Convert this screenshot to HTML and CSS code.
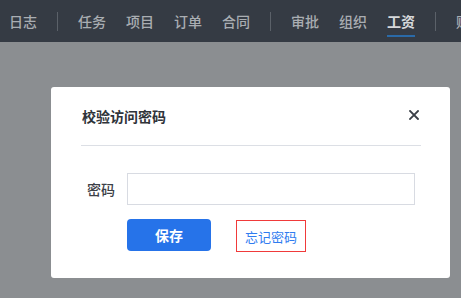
FILE: index.html
```html
<!DOCTYPE html>
<html lang="zh">
<head>
<meta charset="utf-8">
<link rel="stylesheet" href="styles.css">
</head>
<body>
<header class="topbar">
  <nav class="nav">
    <span class="nav-item">日志</span>
    <span class="nav-sep"></span>
    <span class="nav-item">任务</span>
    <span class="nav-item">项目</span>
    <span class="nav-item">订单</span>
    <span class="nav-item">合同</span>
    <span class="nav-sep"></span>
    <span class="nav-item">审批</span>
    <span class="nav-item">组织</span>
    <span class="nav-item active">工资</span>
    <span class="nav-sep"></span>
    <span class="nav-item">财务</span>
  </nav>
</header>
<main class="overlay">
  <section class="modal">
    <div class="modal-header">
      <h2 class="modal-title">校验访问密码</h2>
      <svg class="close" width="10" height="10" viewBox="0 0 10 10"><path d="M1 1L9 9M9 1L1 9" stroke="#3a3f47" stroke-width="1.8" stroke-linecap="square"/></svg>
    </div>
    <div class="form-row">
      <label class="form-label">密码</label>
      <input class="form-input" type="password">
    </div>
    <div class="form-actions">
      <button class="btn-primary">保存</button>
      <a class="forgot">忘记密码</a>
    </div>
  </section>
</main>
</body>
</html>
```
FILE: styles.css
```css
* { box-sizing: border-box; }
html, body { margin: 0; padding: 0; }
body {
  width: 461px;
  height: 298px;
  overflow: hidden;
  background: #8b8e91;
  font-family: "Noto Sans CJK SC", "Noto Sans", sans-serif;
}
.topbar {
  height: 42px;
  background: #353b44;
  overflow: hidden;
}
.nav {
  display: flex;
  align-items: center;
  gap: 20px;
  padding-left: 9px;
  height: 42px;
  white-space: nowrap;
}
.nav-item {
  position: relative;
  font-size: 14px;
  line-height: 20px;
  color: #a9adb2;
  font-weight: 500;
  flex: none;
}
.nav-item.active {
  color: #d6d8db;
  font-weight: bold;
}
.nav-item.active::after {
  content: "";
  position: absolute;
  left: 0;
  right: 0;
  top: 24px;
  height: 2px;
  background: #2a6aa8;
}
.nav-sep {
  width: 1px;
  height: 19px;
  background: #5b6169;
  flex: none;
}
.overlay {
  padding: 45px 0 0 51px;
}
.modal {
  width: 399px;
  height: 191px;
  background: #fff;
  border-radius: 3px;
  padding: 0 29px 0 30px;
}
.modal-header {
  display: flex;
  align-items: center;
  justify-content: space-between;
  height: 59px;
  padding-bottom: 1px;
  border-bottom: 1px solid #dcdfe5;
}
.modal-title {
  margin: 0;
  font-size: 14px;
  line-height: 20px;
  font-weight: bold;
  color: #2f3339;
  padding-left: 1px;
}
.close {
  margin-right: 2px;
  margin-top: -1px;
}
.form-row {
  display: flex;
  align-items: center;
  margin-top: 27px;
}
.form-label {
  width: 46px;
  padding-right: 12px;
  text-align: right;
  font-size: 14px;
  font-weight: 500;
  color: #3c4047;
}
.form-input {
  width: 288px;
  height: 32px;
  border: 1px solid #d8dbe2;
  border-radius: 0;
  outline: none;
  margin: 0;
  padding: 0 8px;
}
.form-actions {
  display: flex;
  align-items: flex-start;
  margin-top: 14px;
  padding-left: 46px;
  gap: 25px;
}
.btn-primary {
  width: 84px;
  height: 32px;
  border: none;
  border-radius: 4px;
  background: #2673e9;
  color: #fff;
  font-family: inherit;
  font-size: 14px;
  font-weight: bold;
  padding: 0;
}
.forgot {
  display: flex;
  align-items: center;
  justify-content: center;
  width: 70px;
  height: 32px;
  margin-top: 1px;
  border: 1px solid #f03a3a;
  color: #2f7cf0;
  font-size: 13px;
}
```
